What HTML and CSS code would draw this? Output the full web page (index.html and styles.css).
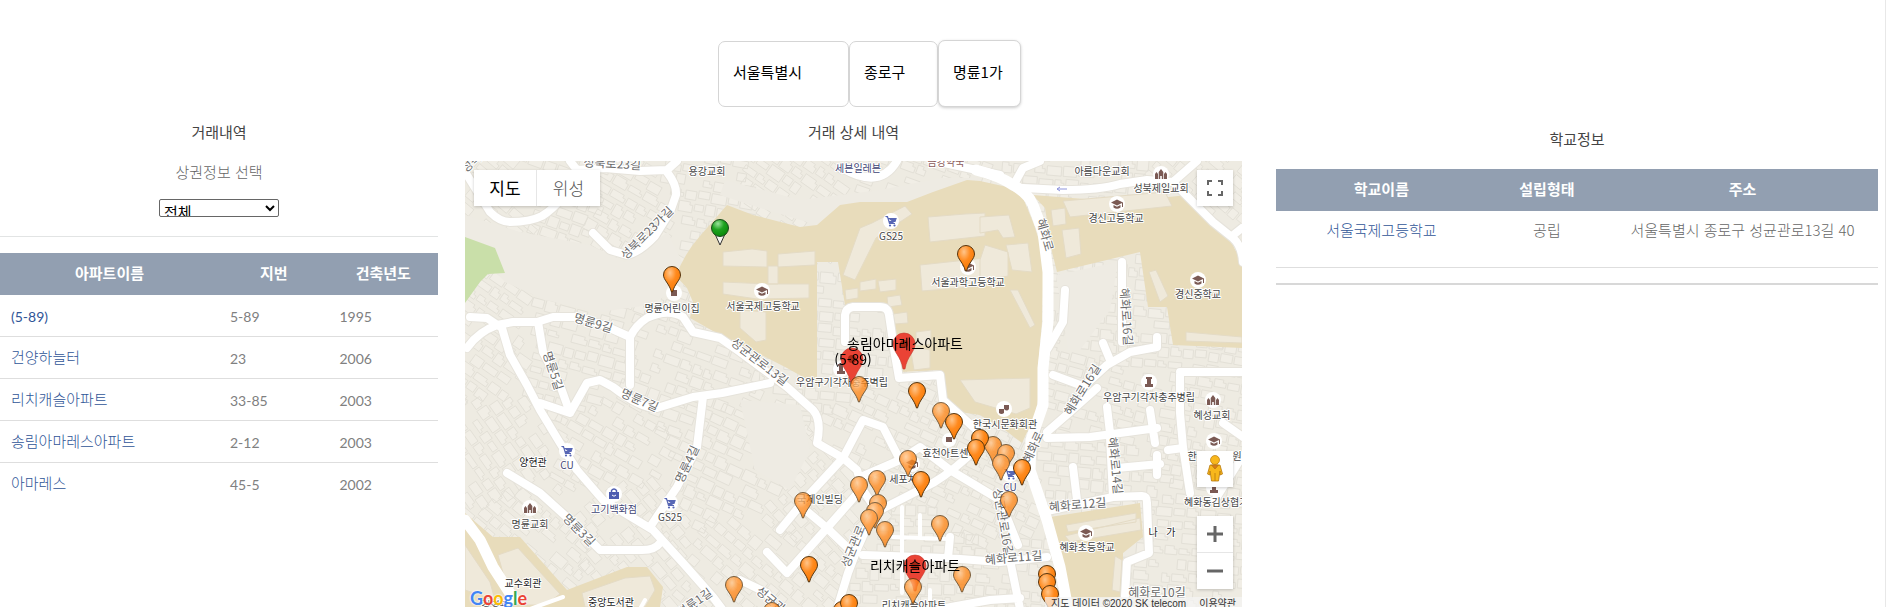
FILE: index.html
```
<!DOCTYPE html>
<html lang="ko">
<head>
<meta charset="utf-8">
<title>거래 상세 내역</title>
<link rel="stylesheet" href="styles.css">
</head>
<body>
<form class="filters">
  <select class="filter filter-city" aria-label="시/도"><option>서울특별시</option></select>
  <select class="filter filter-district" aria-label="구/군"><option>종로구</option></select>
  <select class="filter filter-dong" aria-label="동"><option>명륜1가</option></select>
</form>
<main class="columns">
  <section class="deals">
    <h2 class="title">거래내역</h2>
    <label class="sub" for="shop">상권정보 선택</label>
    <select class="shop" id="shop"><option>전체</option></select>
    <table class="grid deals-grid">
      <thead><tr><th class="half">아파트이름</th><th>지번</th><th>건축년도</th></tr></thead>
      <tbody>
        <tr><td class="num"><a href="#">(5-89)</a></td><td class="num">5-89</td><td class="num">1995</td></tr>
        <tr><td><a href="#">건양하늘터</a></td><td class="num">23</td><td class="num">2006</td></tr>
        <tr><td><a href="#">리치캐슬아파트</a></td><td class="num">33-85</td><td class="num">2003</td></tr>
        <tr><td><a href="#">송림아마레스아파트</a></td><td class="num">2-12</td><td class="num">2003</td></tr>
        <tr><td><a href="#">아마레스</a></td><td class="num">45-5</td><td class="num">2002</td></tr>
      </tbody>
    </table>
  </section>

  <section class="center">
    <h2 class="title">거래 상세 내역</h2>
    <div class="map">
      <svg class="canvas" viewBox="465 161 777 446" preserveAspectRatio="xMidYMin slice">
        <defs>
          <radialGradient id="gOrange" cx=".38" cy=".25" r=".8"><stop offset="0" stop-color="#ffc58a"/><stop offset=".45" stop-color="#ff8a1e"/><stop offset="1" stop-color="#f57600"/></radialGradient>
          <radialGradient id="gGreen" cx=".38" cy=".25" r=".8"><stop offset="0" stop-color="#9be29b"/><stop offset=".45" stop-color="#1fa31f"/><stop offset="1" stop-color="#078607"/></radialGradient>
          <g id="pin"><path d="M-8.500 0A8.500 8.500 0 0 1 8.500 0C8.500 5 3 8 .5 17H-.5C-3 8-8.500 5-8.500 0Z" fill="url(#gOrange)" stroke="#55350f" stroke-width="1"/></g>
          <g id="pinGreen"><path d="M-5 6L0 17L5 6Z" fill="#f6f6f0" stroke="#333" stroke-width="1"/><circle r="8.500" fill="url(#gGreen)" stroke="#1c4a1c"/></g>
          <g id="pinRed"><path d="M-11 0A11 11 0 0 1 11 0C11 8 3 12 1 25H-1C-3 12-11 8-11 0Z" fill="#ea4335" stroke="#c5362b" stroke-width=".6"/><circle r="4" fill="#a52714"/></g>
          <g id="cap"><circle r="8" fill="#fff"/><path d="M-6-1.500L0-4.500L6-1.500L0 1.500Z M-3.500 1L0 2.800L3.500 1V3.500Q0 6-3.500 3.500Z M5-1.500H6V3H5Z" fill="#7b5a54"/></g>
          <g id="cart"><circle r="8" fill="#fff"/><path d="M-5.500-4.500H-3.500L-1.500 2.500H4M-3-2.500H5L4 .5H-2" fill="#5867b5" stroke="#5867b5" stroke-width="1.200"/><circle cx="-1" cy="4.500" r="1.100" fill="#5867b5"/><circle cx="3.500" cy="4.500" r="1.100" fill="#5867b5"/></g>
          <g id="church"><circle r="8" fill="#fff"/><path d="M-6 5V0L-4.500-2L-3 0V5Z M6 5V0L4.500-2L3 0V5Z M-2.300 5V-2L0-5L2.300-2V5H.8V2H-.8V5Z" fill="#7b5a54"/></g>
          <g id="bag"><circle r="8" fill="#fff"/><path d="M-5-2H5V5H-5Z" fill="#4d5cb0"/><path d="M-2.500-2V-3.500Q0-6.500 2.500-3.500V-2" fill="none" stroke="#4d5cb0" stroke-width="1.400"/><path d="M-2 1Q0 3.500 2 1" fill="none" stroke="#fff"/></g>
          <g id="monument"><circle r="8" fill="#fff"/><path d="M-3-5H3V-3H2V2H4V5H-4V2H-2V-3H-3Z" fill="#7b5a54"/></g>
          <g id="theater"><circle r="8" fill="#fff"/><path d="M-5 0H0V4Q-2.500 6-5 4Z M0-4H5V0Q3 3 0 0Z" fill="#7b5a54"/></g>
        </defs>
        <rect x="465" y="161" width="777" height="446" fill="#eeebe2"/>
        <g id="buildings" class="bld"></g>
        <path fill="#eeebe3" d="M465 215L520 232L590 245L625 262L668 232L682 262L676 290L650 305L600 312L545 300L505 282L465 240ZM1056 275L1118 262L1110 310L1080 350L1068 350ZM817 225L760 208L720 195L725 180L800 200L880 190L940 178L980 178L960 186L905 203ZM740 400L800 405L810 450L790 490L755 470Z"/>
        <path fill="#c9dfa9" d="M465 237L495 248L505 273L488 274L480 282L465 303Z"/>
        <g fill="#e8dcbb">
          <path d="M727 205L753 215L800 227L817 225L840 205L860 202L907 202L933 192L967 180L980 181L1007 187L1023 198L1033 222L1043 252L1043 288L1042 322L1038 368L1040 390L1035 415L1022 443L1005 430L980 415L960 412L945 395L940 370L900 372L890 305L845 305L838 262L817 262L817 385L787 368L752 350L720 335L690 318L693 302L687 288L676 276Q684 254 700 236Z"/>
          <path d="M1057 272L1140 252L1148 307L1167 307L1173 345L1242 348V262L1227 235L1187 195L1123 202L1033 195L1045 208L1052 252Z"/>
          <path d="M465 513L493 537L520 537L567 590L627 567L647 567L663 587L660 607H465Z"/>
          <path d="M1050 517L1140 503L1143 537L1123 553V597L1070 600Z"/>
        </g>
        <g class="hall">
          <path d="M723 252L752 249L767 251V267L723 266ZM778 254L815 251V265L778 267ZM768 266H778V284H768ZM723 282L768 284H809V298L757 299L723 294ZM740 310L766 312V340L756 342L740 328Z"/>
          <path d="M843 275L860 228L872 223L905 206L912 214L876 238L855 280ZM928 217L965 214L985 213V236L930 242ZM920 265L985 258V286L922 291ZM860 282L876 279V289L860 291ZM878 281L896 279V290L880 292ZM845 290L858 288V298L846 300ZM887 297L900 295L902 305L888 307ZM893 314L907 312L908 323L895 324Z"/>
          <path d="M916 332L931 330V344L916 346ZM910 346L930 350V368L914 370ZM960 380L1030 378V408L1016 414L975 402Z"/>
          <path d="M980 217L1009 215L1015 237L1003 238L998 230L980 233ZM985 245L1008 252V276L980 282V260ZM1010 290L1018 290L1035 325L1030 328ZM1006 245L1028 243L1032 272L1012 270Z"/>
          <path d="M1063 201L1165 192L1172 206L1070 217ZM1051 210L1065 208L1066 224L1053 226ZM1062 230L1079 228L1081 254L1066 258ZM1149 272L1156 270L1168 296L1160 302ZM1186 332L1242 337V343L1186 341Z"/>
          <path d="M1066 525L1136 513V522L1068 532ZM1065 536L1140 518L1141 530L1070 542ZM1115 556L1122 560L1120 592L1112 590Z"/>
          <path d="M498 555L518 548L560 594L545 605H512ZM582 593L625 578L650 576L655 590L645 607H585ZM465 545L490 582L495 600L465 590Z"/>
        </g>
        <g class="road edge">
          <path id="r1" d="M467 175L490 212Q500 222 510 222Q530 222 542 216Q552 210 562 198L577 170M570 161L577 170L605 168L640 171L667 170L677 161M667 172Q677 185 676 195L670 212L655 236Q640 252 627 255L610 250L593 233"/>
          <path id="r2" d="M467 348Q478 332 497 325L513 322L537 322L553 317L577 317L603 325L630 337Q636 325 647 318Q668 308 683 317L693 332L720 338L740 352L787 387L813 410Q822 420 817 443L843 458L857 470L863 490L876 510M470 317L487 318L502 328L510 355L527 385L540 410L560 443L577 470L603 500L653 530L683 563L713 597L722 609M630 337L630 385"/>
          <path id="r3" d="M538 322L543 352L560 385L570 413M540 403L570 413L587 383L600 380L613 387Q640 408 657 408L693 397L722 393L770 383M703 397L697 447L677 487L650 527M507 473L540 493L570 520L600 550H642Q655 550 660 543"/>
          <path id="r4" d="M837 609L848 573L858 547L867 527Q873 514 884 508L933 483Q955 470 980 445M843 458L863 420L883 427L900 460L863 476M900 460L920 447L950 470M843 458L807 497L780 530M863 487L827 528L787 573L767 552M803 508L827 528L853 553M740 580L767 593L775 609"/>
          <path id="r5" d="M845 342V315Q846 308 853 307H880Q888 307 889 315L895 355L899 378L940 375L943 400L980 433M863 555L947 558L1000 562L1047 557M950 537L948 558M842 168Q880 190 897 161M935 161L1000 175M950 470L1000 500L1018 545"/>
          <path id="r6" d="M1013 186L1023 168L1040 161M1023 188L1063 190Q1100 190 1120 184L1147 180L1173 182L1193 202L1213 222L1233 238Q1242 246 1243 262M1173 182L1197 161M1242 228L1232 236M1048 348L1063 322L1065 290M1122 262V342M1103 343L1110 360M1157 337V347L1130 352L1107 365L1083 387M1053 375L1080 385M1097 388L1070 412L1047 432"/>
          <path id="r7" d="M1047 438L1090 437L1157 428M1107 407L1110 433M1150 410L1155 443M1117 468L1160 464M1157 455V475M1110 437L1113 497M1073 467L1077 500M1047 511L1113 497L1142 496Q1147 496 1147 503L1149 553L1127 562L1125 596M1180 372H1243M1180 375V413L1183 447L1190 493M1223 423L1243 437M1010 560L1020 609M1168 450L1183 448M1215 500L1243 455M940 609L990 600L1020 598"/>
        </g>
        <g class="road">
          <use href="#r1"/><use href="#r2"/><use href="#r3"/><use href="#r4"/><use href="#r5"/><use href="#r6"/><use href="#r7"/>
        </g>
        <path class="road thin" d="M902 507V593M920 515V537M893 537L950 539M645 600L640 609M530 609L563 597M930 590V607"/>
        <path class="road main" d="M976 170Q1000 176 1013 185Q1028 193 1033 205L1043 232L1048 272V322L1043 368V405L1031 440L1030 470L1047 520L1060 567L1068 609M465 520L480 540L493 567L513 598"/>
        <path d="M1057 189H1067M1057 189L1060 187M1057 189L1060 191" stroke="#8f95dc" fill="none"/>

        <g class="street">
          <text transform="translate(612 168) rotate(3)">성북로23길</text><text transform="translate(474 166) rotate(-40)">성북</text>
          <text transform="translate(650 236) rotate(-45)">성북로23가길</text>
          <text transform="translate(592 327) rotate(17)">명륜9길</text><text transform="translate(549 372) rotate(72)">명륜5길</text>
          <text transform="translate(638 404) rotate(24)">명륜7길</text><text transform="translate(691 466) rotate(-65)">명륜4길</text>
          <text transform="translate(576 533) rotate(45)">명륜3길</text><text transform="translate(757 365) rotate(38)">성균관로13길</text>
          <text transform="translate(857 548) rotate(-68)">성균관로</text><text transform="translate(999 523) rotate(80)">성균관로16길</text>
          <text transform="translate(1041 236) rotate(74)">혜화로</text><text transform="translate(1122 317) rotate(86)">혜화로16길</text>
          <text transform="translate(1086 392) rotate(-58)">혜화로16길</text><text transform="translate(1037 449) rotate(-65)">혜화로</text>
          <text transform="translate(1111 466) rotate(84)">혜화로14길</text><text transform="translate(1078 509) rotate(-5)">혜화로12길</text>
          <text transform="translate(1014 562) rotate(-5)">혜화로11길</text><text x="1157" y="597">혜화로10길</text>
          <text transform="translate(697 606) rotate(-35)">명륜1길</text><text transform="translate(768 603) rotate(40)">성균관</text>
        </g>
        <g>
          <use href="#cap" x="762" y="291"/><use href="#cap" x="968" y="267"/><use href="#cap" x="1117" y="204"/><use href="#cap" x="1198" y="280"/><use href="#cap" x="1086" y="533"/><use href="#cap" x="1214" y="441"/>
          <use href="#cart" x="891" y="221"/><use href="#cart" x="567" y="451"/><use href="#cart" x="670" y="503"/><use href="#cart" x="1010" y="474"/>
          <use href="#church" x="1161" y="174"/><use href="#church" x="530" y="508"/><use href="#church" x="1213" y="400"/>
          <use href="#bag" x="614" y="494"/><use href="#monument" x="841" y="369"/><use href="#monument" x="1149" y="382"/><use href="#monument" x="1214" y="488"/><use href="#theater" x="1004" y="409"/>
          <circle cx="674" cy="293" r="8" fill="#fff"/><rect x="671" y="290" width="6" height="6" fill="#7b5a54"/>
          <circle cx="949" cy="440" r="7" fill="#fff"/><rect x="946" y="437" width="6" height="5" fill="#7b5a54"/><use href="#cap" x="912" y="464"/>
        </g>
        <g class="poi">
          <text x="707" y="175">용강교회</text><text x="858" y="172" class="shopname">세븐일레븐</text><text x="946" y="166" class="red">금강약국</text>
          <text x="891" y="240">GS25</text><text x="672" y="312">명륜어린이집</text><text x="763" y="310">서울국제고등학교</text><text x="968" y="286">서울과학고등학교</text>
          <text x="1102" y="175">아름다운교회</text><text x="1161" y="192">성북제일교회</text><text x="1116" y="222">경신고등학교</text><text x="1198" y="298">경신중학교</text>
          <text x="842" y="386">우암구기각자충주벽립</text><text x="1149" y="401">우암구기각자충주병립</text><text x="1212" y="419">혜성교회</text><text x="1005" y="428">한국시문화회관</text>
          <text x="950" y="457">효천아트센터</text><text x="903" y="483">세포치</text><text x="820" y="503">국제인빌딩</text><text x="533" y="466" class="dark">양현관</text>
          <text x="567" y="469" class="shopname">CU</text><text x="1010" y="491" class="shopname">CU</text><text x="614" y="513" class="shopname">고기백화점</text><text x="670" y="521">GS25</text>
          <text x="530" y="528">명륜교회</text><text x="523" y="587" class="dark">교수회관</text><text x="611" y="606" class="dark">중앙도서관</text><text x="495" y="609">경영관</text>
          <text x="1192" y="460">한</text><text x="1237" y="460">원</text><text x="1184" y="506" class="start">혜화동김상협가옥</text><text x="1087" y="551">혜화초등학교</text><text x="1162" y="536" class="dark">나&#160;&#160;&#160;가</text>
          <text x="914" y="609">리치캐슬아파트</text>
        </g>

        <use href="#pinRed" x="904" y="344"/><use href="#pinRed" x="852" y="359"/><use href="#pinRed" x="915" y="566"/>
        <g opacity=".78">
          <use href="#pin" x="859" y="385"/><use href="#pin" x="941" y="411"/><use href="#pin" x="908" y="459"/><use href="#pin" x="877" y="479"/><use href="#pin" x="859" y="485"/><use href="#pin" x="803" y="501"/>
          <use href="#pin" x="878" y="503"/><use href="#pin" x="875" y="511"/><use href="#pin" x="869" y="518"/><use href="#pin" x="885" y="530"/><use href="#pin" x="940" y="524"/><use href="#pin" x="734" y="585"/>
          <use href="#pin" x="962" y="575"/><use href="#pin" x="913" y="587"/><use href="#pin" x="772" y="611"/><use href="#pin" x="993" y="445"/><use href="#pin" x="1006" y="453"/><use href="#pin" x="1001" y="463"/><use href="#pin" x="1009" y="500"/>
        </g>
        <use href="#pinGreen" x="720" y="228"/><use href="#pin" x="672" y="275"/><use href="#pin" x="966" y="254"/>
        <use href="#pin" x="917" y="391"/><use href="#pin" x="954" y="422"/><use href="#pin" x="980" y="438"/><use href="#pin" x="976" y="448"/><use href="#pin" x="921" y="480"/><use href="#pin" x="1022" y="468"/>
        <use href="#pin" x="809" y="565"/><use href="#pin" x="842" y="610"/><use href="#pin" x="849" y="603"/><use href="#pin" x="1047" y="574"/><use href="#pin" x="1047" y="582"/><use href="#pin" x="1050" y="594"/>
        <g class="apt"><text x="905" y="349">송림아마레스아파트</text><text x="853" y="365">(5-89)</text><text x="915" y="571">리치캐슬아파트</text></g>
      </svg>

      <div class="types"><button class="type on">지도</button><button class="type">위성</button></div>
      <button class="ctl full" aria-label="전체 화면"><svg width="16" height="16" viewBox="0 0 16 16"><path d="M1 5V1H5M11 1H15V5M15 11V15H11M5 15H1V11" fill="none" stroke="#666" stroke-width="2"/></svg></button>
      <div class="stack">
        <button class="ctl" aria-label="스트리트 뷰"><svg width="18" height="28" viewBox="0 0 18 28"><circle cx="9" cy="5" r="4.500" fill="#f8b71c" stroke="#b8790c" stroke-width=".7"/><path d="M4 10H14L16.500 19L14 20V16L12.500 26H5.500L4 16V20L1.500 19Z" fill="#f8b71c" stroke="#b8790c" stroke-width=".8"/><path d="M5.500 10L9 14L12.500 10ZM9 18V26" fill="#d9781b" stroke="#b8790c" stroke-width=".8"/></svg></button>
        <div class="zoom">
          <button class="ctl" aria-label="확대"><svg width="16" height="16" viewBox="0 0 16 16"><path d="M8 0V16M0 8H16" stroke="#666" stroke-width="3"/></svg></button>
          <button class="ctl" aria-label="축소"><svg width="16" height="16" viewBox="0 0 16 16"><path d="M0 8H16" stroke="#666" stroke-width="3"/></svg></button>
        </div>
      </div>
      <div class="logo"><span class="b">G</span><span class="r">o</span><span class="y">o</span><span class="b">g</span><span class="g">l</span><span class="r">e</span></div>
      <div class="credit"><span>지도 데이터 ©2020 SK telecom</span><a href="#">이용약관</a></div>
    </div>
  </section>

  <section class="schools">
    <h2 class="title">학교정보</h2>
    <table class="grid schools-grid">
      <thead><tr><th class="c-name">학교이름</th><th class="c-kind">설립형태</th><th>주소</th></tr></thead>
      <tbody><tr><td><a href="#">서울국제고등학교</a></td><td>공립</td><td>서울특별시 종로구 성균관로13길 40</td></tr></tbody>
    </table>
    <hr class="rule">
  </section>
</main>
<script src="map.js"></script>
</body>
</html>
```
FILE: styles.css
```
* { box-sizing: border-box; }
body {
  margin: 0;
  height: 100vh;
  display: flex;
  flex-direction: column;
  overflow: hidden;
  background: #fff;
  border-right: 1px solid #e8e8e8;
  color: #666;
  font: 300 15px/18px "Noto Sans CJK KR", sans-serif;
}
a { color: #2f5597; text-decoration: none; }
button, select { font: inherit; }

.filters { display: flex; align-items: flex-end; justify-content: center; height: 107px; padding-right: 146px; }
.filter {
  appearance: none;
  height: 66px;
  padding: 0 14px 4px;
  border: 1px solid #d5d5d5;
  border-radius: 7px;
  background: #fff;
  color: #000;
  font-weight: 400;
}
.filter-city { width: 131px; }
.filter-district { width: 89px; }
.filter-dong { width: 83px; height: 67px; box-shadow: 0 1px 3px #ccc; }

.columns {
  flex: 1;
  min-height: 0;
  display: grid;
  grid-template-columns: 438fr 777fr 609fr;
  gap: 27px;
  padding-right: 7px;
}
.title { margin: 0; font-size: 15px; font-weight: 400; line-height: 18px; text-align: center; color: #444; }

.deals { display: flex; flex-direction: column; align-items: center; padding-top: 16px; }
.sub { margin-top: 22px; }
.shop {
  width: 120px;
  height: 18px;
  margin: 18px 0 19px;
  padding: 0;
  border: 1px solid #666;
  border-radius: 2px;
  background: #fff;
  color: #000;
  font-weight: 400;
}
.grid { width: 100%; border-collapse: collapse; table-layout: fixed; }
.grid th { height: 42px; padding: 0 0 2px; background: #929fb1; color: #fff; font-weight: 700; }
.grid td { height: 42px; padding: 0 11px 2px; border-bottom: 1px solid #dedede; }
.deals-grid { border-top: 1px solid #e2e4e4; border-collapse: separate; border-spacing: 0; padding-top: 16px; }
.deals-grid tr:last-child td { border-bottom: 0; }
.half { width: 50%; }
.grid .num { font: 14px/18px Lato, sans-serif; padding: 2px 11px 0; color: #808080; }

.center { display: flex; flex-direction: column; padding-top: 16px; min-height: 0; }
.map { position: relative; flex: 1; min-height: 0; margin-top: 20px; overflow: hidden; }
.canvas { display: block; width: 100%; height: 100%; }
.bld { fill: #f1eee6; stroke: #e3e0d7; stroke-width: 1; }
.hall { fill: #efe9da; stroke: #e4dbc5; stroke-width: 1; }
.road { fill: none; stroke: #fff; stroke-width: 8; stroke-linecap: round; stroke-linejoin: round; }
.edge { stroke: #e6e3db; stroke-width: 10; }
.edge path { stroke: inherit; }
.thin { stroke-width: 4; }
.main { stroke-width: 11; }
.canvas text { text-anchor: middle; paint-order: stroke; stroke: #fff; stroke-width: 2px; stroke-linejoin: round; }
.street text { font-size: 12px; font-weight: 400; fill: #6a6a6a; }
.poi text { font-size: 10px; font-weight: 400; fill: #444; }
.poi .shopname { fill: #3f4575; }
.poi .red { fill: #8c5a5a; }
.poi .dark { fill: #222; }
.poi .start { text-anchor: start; }
.canvas .apt text { font-size: 14px; font-weight: 400; fill: #000; stroke: none; }

.types { position: absolute; left: 9px; top: 9px; display: flex; background: #fff; box-shadow: 0 1px 3px #0003; }
.type { width: 63px; height: 36px; padding: 0; border: 0; background: none; font-size: 17px; color: #555; }
.type.on { color: #000; font-weight: 400; border-right: 1px solid #e6e6e6; }
.ctl { display: grid; place-items: center; width: 36px; height: 36px; padding: 0; border: 0; background: #fff; box-shadow: 0 1px 3px #0003; }
.full { position: absolute; right: 9px; top: 9px; }
.stack { position: absolute; right: 9px; bottom: 18px; display: grid; gap: 29px; }
.zoom { background: #fff; box-shadow: 0 1px 3px #0003; }
.zoom .ctl { box-shadow: none; }
.zoom .ctl + .ctl { border-top: 1px solid #e6e6e6; height: 37px; }
.logo { position: absolute; left: 5px; bottom: -3px; font: 700 18px/24px Lato, sans-serif; text-shadow: 0 0 2px #fff, 0 0 2px #fff; }
.logo .b { color: #4285f4; }
.logo .r { color: #ea4335; }
.logo .y { color: #fbbc05; }
.logo .g { color: #34a853; }
.credit { position: absolute; right: 0; bottom: -4px; display: flex; gap: 13px; padding: 0 6px; font: 10px/14px "Liberation Sans", "Noto Sans CJK KR", sans-serif; color: #333; background: #f5f5f5b3; }
.credit a { color: #333; }

.schools { padding: 23px 0 0 7px; }
.schools-grid { margin-top: 21px; }
.schools-grid td { height: 56px; padding: 10px 0 0; vertical-align: top; text-align: center; }
.c-name { width: 35%; }
.c-kind { width: 20%; }
.rule { margin: 15px 0 0; border: 0; border-top: 2px solid #d8d8d8; }
```
FILE: map.js
```
// Fills the city blocks with small building footprints, each district on its own street angle.
const zones = [
  [490, 190, 40], [560, 180, 20], [630, 200, 30], [700, 180, 10], [790, 180, 35], [900, 175, 20],
  [1080, 170, 5], [1210, 190, 40], [490, 350, 35], [560, 360, 15], [600, 440, 30], [680, 360, 20],
  [500, 430, 55], [540, 540, 40], [620, 520, 50], [730, 450, 25], [830, 340, 5], [760, 560, 40],
  [830, 490, 48], [880, 440, 25], [920, 560, 2], [980, 480, 25], [1090, 400, 15], [1090, 470, 5],
  [1210, 420, 10], [1190, 550, 5], [1130, 320, 5], [1000, 590, 5]
];
let seed = 7;
const rnd = () => (seed = (seed * 16807) % 2147483647) / 2147483647;
const nearest = (x, y) => zones.reduce((best, z, i) => {
  const d = (z[0] - x) ** 2 + (z[1] - y) ** 2;
  return d < best[0] ? [d, i] : best;
}, [Infinity, 0])[1];
let d = "";
zones.forEach(([cx, cy, deg], i) => {
  const a = deg * Math.PI / 180, c = Math.cos(a), s = Math.sin(a);
  for (let v = -120; v < 120; v += 13) {
    for (let u = -120; u < 120;) {
      const w = 8 + rnd() * 8, h = 8 + rnd() * 4, j = rnd() * 3, skip = rnd() < 0.14;
      const at = (p, q) => (cx + p * c - q * s).toFixed(1) + " " + (cy + p * s + q * c).toFixed(1);
      const x = cx + u * c - v * s, y = cy + u * s + v * c;
      if (!skip && nearest(x, y) === i) {
        const n = rnd() < 0.4 ? 3 : 0;
        d += `M${at(u, v + j)}L${at(u + w - n, v + j)}L${at(u + w - n, v + j + n)}L${at(u + w, v + j + n)}L${at(u + w, v + h)}L${at(u, v + h)}Z`;
      }
      u += w + 2;
    }
  }
});
const path = document.createElementNS("http://www.w3.org/2000/svg", "path");
path.setAttribute("d", d);
document.getElementById("buildings").appendChild(path);
```
